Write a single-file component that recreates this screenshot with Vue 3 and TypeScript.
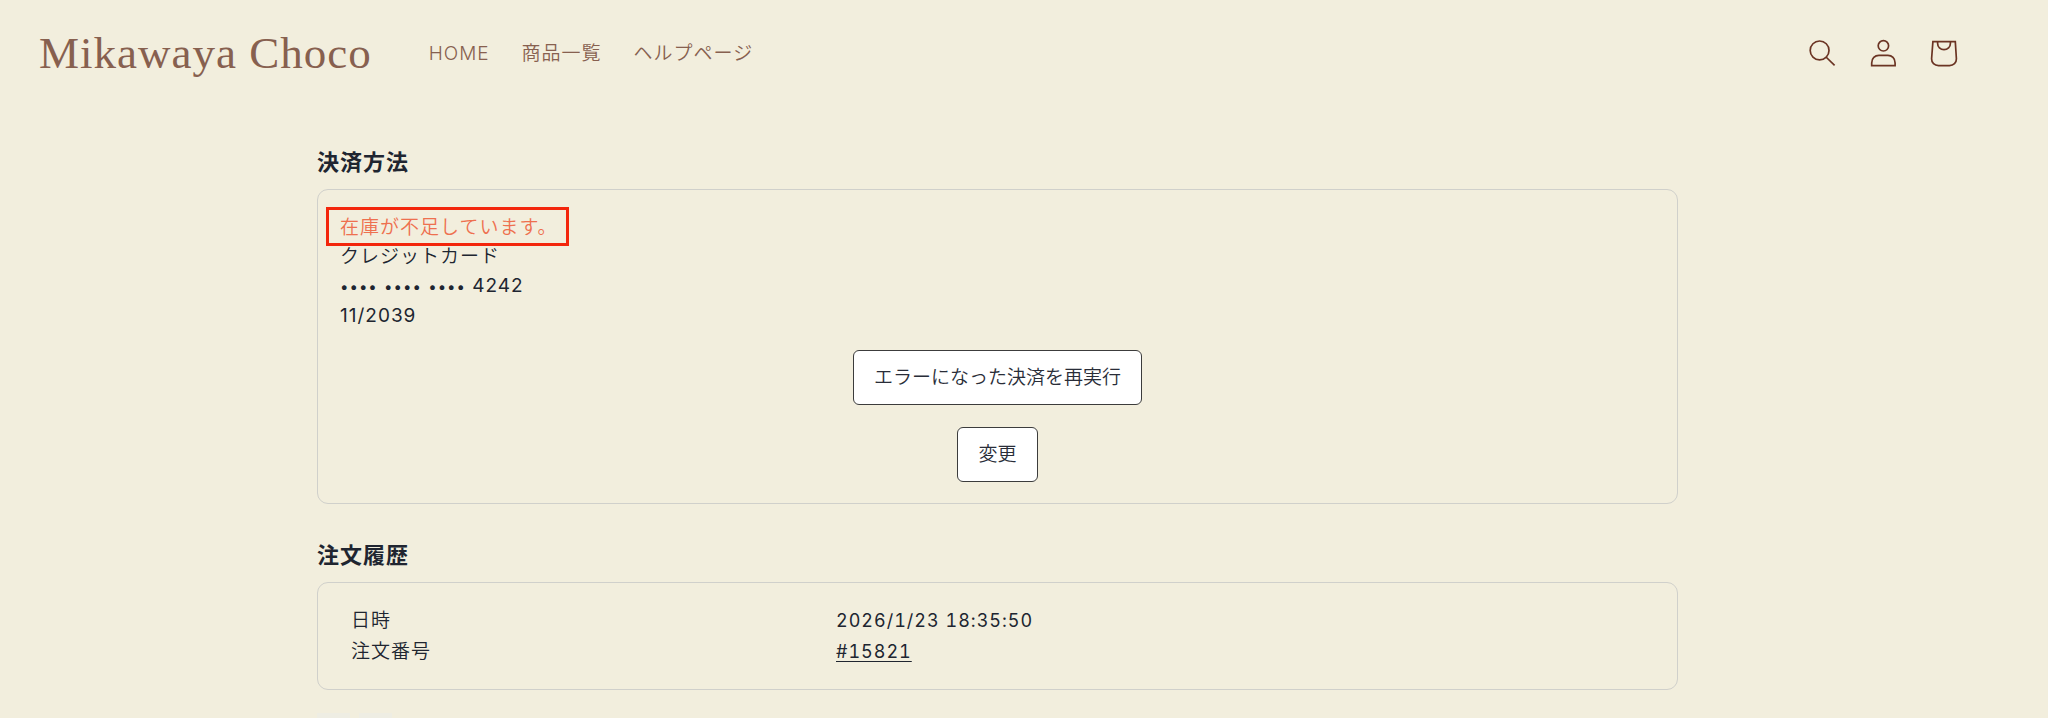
<script setup lang="ts">
const navItems: string[] = ['HOME', '商品一覧', 'ヘルプページ']
const orderNumber = '#15821'
</script>

<template>
  <div class="page">
    <header class="header">
      <a class="brand" href="#">Mikawaya Choco</a>
      <nav class="nav">
        <a v-for="item in navItems" :key="item" href="#">{{ item }}</a>
      </nav>
      <div class="actions">
        <button type="button" aria-label="検索">
          <svg width="28" height="28" viewBox="0 0 28 28">
            <circle cx="11.6" cy="11.4" r="9.4" />
            <path d="M18 18 L26.6 26.4" />
          </svg>
        </button>
        <button type="button" aria-label="アカウント">
          <svg width="28" height="28" viewBox="0 0 28 28">
            <circle cx="14.4" cy="6.8" r="5.2" />
            <path d="M2.7 26.6 V23.9 C2.7 19.4 5.9 16.4 9.9 16.4 H18.9 C22.9 16.4 26.1 19.4 26.1 23.9 V26.6 Z" />
          </svg>
        </button>
        <button type="button" aria-label="カート">
          <svg width="28" height="28" viewBox="0 0 28 28">
            <path d="M2.9 2.6 H25.3 L26.4 19.8 C26.5 23.8 23.5 26.6 19.5 26.6 H8.5 C4.5 26.6 1.5 23.8 1.6 19.8 Z" />
            <path d="M7.6 2.6 V4.4 C7.6 7.9 10.4 10.6 14 10.6 C17.6 10.6 20.4 7.9 20.4 4.4 V2.6" />
          </svg>
        </button>
      </div>
    </header>

    <main class="main">
      <section>
        <h2>決済方法</h2>
        <div class="card payment">
          <p class="error">在庫が不足しています。</p>
          <p class="light">クレジットカード</p>
          <p><span class="mask">••••</span> <span class="mask">••••</span> <span class="mask">••••</span> 4242</p>
          <p>11/2039</p>
          <div class="buttons">
            <button type="button">エラーになった決済を再実行</button>
            <button type="button">変更</button>
          </div>
        </div>
      </section>
      <section>
        <h2>注文履歴</h2>
        <dl class="card history">
          <dt>日時</dt>
          <dd>2026/1/23 18:35:50</dd>
          <dt>注文番号</dt>
          <dd><a href="#">{{ orderNumber }}</a></dd>
        </dl>
      </section>
      <div class="chips">
        <span></span>
        <span></span>
      </div>
    </main>
  </div>
</template>

<style>
body {
  margin: 0;
  background: #f2eedd;
}
</style>

<style scoped>
.page {
  color: #202530;
  font-family: Inter, "Noto Sans CJK JP", sans-serif;
  font-size: 19px;
  font-weight: 400;
  line-height: 29px;
  letter-spacing: 1px;
}
.header {
  display: flex;
  align-items: center;
  height: 106px;
  padding: 0 90px 0 39px;
  color: #87604f;
}
.brand {
  font-family: "Liberation Serif", serif;
  font-size: 45px;
  line-height: 56px;
  color: inherit;
  text-decoration: none;
}
.nav {
  display: flex;
  gap: 32px;
  margin-left: 57px;
}
.nav a {
  color: inherit;
  text-decoration: none;
}
.actions {
  display: flex;
  gap: 33px;
  margin-left: auto;
}
.actions button {
  display: block;
  padding: 0;
  border: 0;
  background: none;
}
.actions svg {
  display: block;
  fill: none;
  stroke: #6b3423;
  stroke-width: 1.7;
}
.main {
  width: 1361px;
  max-width: calc(100% - 64px);
  margin-left: 317px;
  padding-top: 40px;
}
h2 {
  margin: 0;
  font-size: 22px;
  line-height: 32px;
  font-weight: 700;
}
.card {
  box-sizing: border-box;
  margin: 11px 0 35px;
  border: 1px solid #d0d0cb;
  border-radius: 11px;
}
.payment {
  padding: 23px 22px 21px;
}
p {
  margin: 0;
}
.light,
.error,
.nav,
.buttons button,
dt {
  font-weight: 350;
}
.error {
  width: max-content;
  margin: -6px -14px -4px;
  padding: 3px 8px 1px 11px;
  border: 3px solid #f3260c;
  color: #ee704f;
}
.mask {
  font-size: 15px;
}
.buttons {
  display: flex;
  flex-direction: column;
  align-items: center;
  gap: 22px;
  margin-top: 20px;
}
.buttons button {
  padding: 12px 20px;
  border: 1px solid #3c3c3c;
  border-radius: 6px;
  background: #fff;
  color: #292d38;
  font-family: inherit;
  font-size: 19px;
  line-height: 29px;
}
.history {
  display: grid;
  grid-template-columns: 485px 1fr;
  row-gap: 2px;
  margin-bottom: 23px;
  padding: 23px 33px;
}
dd {
  margin: 0;
  font-size: 18px;
  font-variant-numeric: tabular-nums;
}
dd a {
  color: inherit;
  text-underline-offset: 3px;
}
.chips {
  display: flex;
  gap: 9px;
}
.chips span {
  width: 33px;
  height: 5px;
  background: #eeede3;
}
</style>
